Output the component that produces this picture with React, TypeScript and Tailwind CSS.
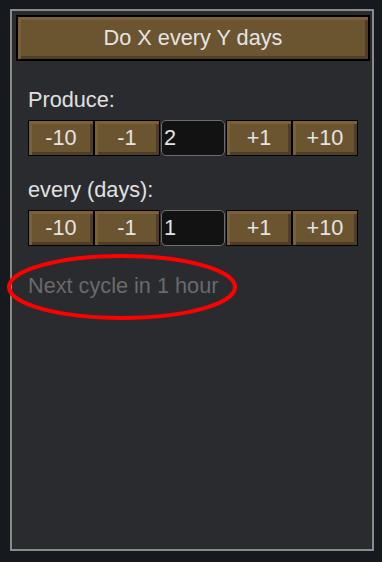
const font = { fontFamily: '"Liberation Sans", Arial, sans-serif' };

function GoldButton({ label, className = "" }: { label: string; className?: string }) {
  return (
    <button
      className={`flex items-center justify-center border border-black bg-[#6b5430] text-[#e4e4e4] shadow-[inset_3px_3px_0_#7a6036,inset_-3px_-3px_0_#4f3e25] ${className}`}
    >
      {label}
    </button>
  );
}

function Stepper({ value }: { value: string }) {
  return (
    <div className="flex h-[36px] w-[330px]">
      <GoldButton label="-10" className="h-[36px] w-[66px]" />
      <GoldButton label="-1" className="h-[36px] w-[66px]" />
      <div className="mx-[1px] flex h-[36px] w-[64px] items-center rounded-[5px] border border-[#6e6e6e] bg-[#121212] pl-[2px] text-[#e4e4e4]">
        {value}
      </div>
      <GoldButton label="+1" className="h-[36px] w-[66px]" />
      <GoldButton label="+10" className="h-[36px] w-[66px]" />
    </div>
  );
}

export default function App() {
  return (
    <div
      className="relative h-[562px] w-[382px] overflow-hidden bg-[#16191d] pl-[10px] pt-[9px] text-[21.7px] leading-[24px]"
      style={font}
    >
      <div className="h-[542px] w-[364px] border-2 border-[#8a8a8a] bg-[#2a2b2e] pt-[4px]">
        <GoldButton label="Do X every Y days" className="ml-[4px] h-[46px] w-[354px] border-2" />

        <div className="pl-[16px] pt-[27px]">
          <div className="text-[#e0e0e0]">Produce:</div>
          <div className="mt-[8px]">
            <Stepper value="2" />
          </div>

          <div className="mt-[22px] text-[#e0e0e0]">every (days):</div>
          <div className="mt-[8px]">
            <Stepper value="1" />
          </div>

          <div className="mt-[28px] text-[#6a6a6a]">Next cycle in 1 hour</div>
        </div>
      </div>

      {/* annotation circle */}
      <svg className="pointer-events-none absolute left-0 top-0" width="382" height="562">
        <ellipse cx="122" cy="287" rx="113" ry="31" fill="none" stroke="#ff0000" strokeWidth="4" />
      </svg>
    </div>
  );
}
